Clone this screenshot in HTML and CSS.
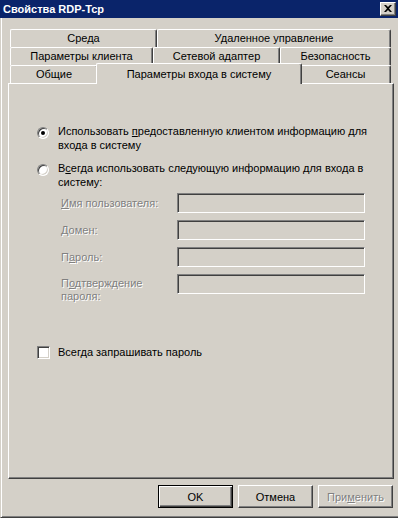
FILE: index.html
```html
<!DOCTYPE html>
<html lang="ru">
<head>
  <meta charset="UTF-8">
  <title>Свойства RDP-Tcp</title>
  <link rel="stylesheet" href="styles.css">
</head>
<body>

  <div class="window">
    <div class="titlebar">
      <span class="title">Свойства RDP-Tcp</span>
      <span class="close-btn">
        <svg width="8" height="7" viewBox="0 0 8 7"><path d="M0 0h2l2 2 2-2h2L5 3.5 8 7H6L4 5 2 7H0l3-3.5z" fill="#000"/></svg>
      </span>
    </div>

    <div class="client">
      <div class="tabs">
        <div class="tab-row">
          <div class="tab t-env">Среда</div>
          <div class="tab t-remote">Удаленное управление</div>
        </div>
        <div class="tab-row">
          <div class="tab t-client">Параметры клиента</div>
          <div class="tab t-adapter">Сетевой адаптер</div>
          <div class="tab t-security">Безопасность</div>
        </div>
        <div class="tab-row">
          <div class="tab t-general">Общие</div>
          <div class="tab t-logon active">Параметры входа в систему</div>
          <div class="tab t-sessions">Сеансы</div>
        </div>
      </div>

      <div class="panel">
        <div class="option">
          <span class="radio checked"></span>
          <span class="option-text">Использовать <u>п</u>редоставленную клиентом информацию для<br>входа в систему</span>
        </div>
        <div class="option second">
          <span class="radio"></span>
          <span class="option-text">В<u>с</u>егда использовать следующую информацию для входа в<br>систему:</span>
        </div>

        <div class="fields">
          <label class="field-label"><u>И</u>мя пользователя:</label>
          <span class="field"></span>
          <label class="field-label"><u>Д</u>омен:</label>
          <span class="field"></span>
          <label class="field-label">П<u>а</u>роль:</label>
          <span class="field"></span>
          <label class="field-label tall">П<u>о</u>дтверждение<br>пароля:</label>
          <span class="field"></span>
        </div>

        <div class="check-row">
          <span class="checkbox"></span>
          <span>Всегда запрашивать пароль</span>
        </div>
      </div>

      <div class="buttons">
        <button class="btn default">OK</button>
        <button class="btn">Отмена</button>
        <button class="btn disabled">При<u>м</u>енить</button>
      </div>
    </div>
  </div>

</body>
</html>
```

FILE: styles.css
```css
/*  Classic dialog colours  */
:root{
  --face: #d4d0c8;
  --light: #fff;
  --shadow: #808080;
  --dark: #404040;
  --caption: #0a246a;
}

* {
  box-sizing: border-box;
}
html, body {
  margin: 0;
  padding: 0;
}
body {
  width: 398px;
  height: 518px;
  background: var(--face);
  font-family: "Liberation Sans", Arial, sans-serif;
  font-size: 11px;
  color: #000;
}
u {
  text-decoration: underline;
  text-underline-offset: 1px;
}

/*  Window  */
.window {
  display: flex;
  flex-direction: column;
  width: 398px;
  height: 518px;
}
.titlebar {
  height: 18px;
  background: var(--caption);
  display: flex;
  align-items: center;
  justify-content: space-between;
  padding: 0 2px 0 3px;
}
.title {
  color: #fff;
  font-weight: bold;
  font-size: 11px;
}
.close-btn {
  width: 16px;
  height: 14px;
  background: var(--face);
  border: 1px solid;
  border-color: var(--light) var(--dark) var(--dark) var(--light);
  box-shadow: inset -1px -1px var(--shadow);
  display: flex;
  align-items: center;
  justify-content: center;
  padding-bottom: 1px;
}
.client {
  flex: 1;
  padding: 11px 0 0 7px;
  border-left: 1px solid var(--face);
  border-bottom: 1px solid var(--dark);
  box-shadow: inset 1px 0 var(--light), inset 0 -1px var(--shadow);
}

/*  Tabs  */
.tabs {
  width: 386px;
  padding: 0 2px;
}
.tab-row {
  display: flex;
  height: 18px;
}
.tab {
  flex: none;
  height: 18px;
  border-top: 1px solid var(--light);
  border-left: 1px solid var(--light);
  border-right: 1px solid var(--dark);
  border-radius: 2px 2px 0 0;
  box-shadow: inset -1px 0 var(--shadow);
  background: var(--face);
  line-height: 16px;
  text-align: center;
  white-space: nowrap;
}
.tab.active {
  position: relative;
  z-index: 1;
  height: 21px;
  margin: -2px -2px 0;
  padding-top: 2px;
}
.t-env { width: 147px; }
.t-remote { width: 234px; }
.t-client { width: 143px; }
.t-adapter { width: 127px; }
.t-security { width: 111px; }
.t-general { width: 88px; }
.t-logon { width: 206px; }
.t-sessions { width: 91px; }

/*  Page panel  */
.panel {
  width: 386px;
  height: 396px;
  border: 1px solid;
  border-color: var(--light) var(--dark) var(--dark) var(--light);
  box-shadow: inset -1px -1px var(--shadow);
  padding: 40px 0 0 28px;
}
.option {
  display: flex;
  gap: 9px;
  line-height: 14px;
  white-space: nowrap;
}
.option.second {
  margin-top: 9px;
}
.radio {
  flex: none;
  position: relative;
  width: 12px;
  height: 12px;
  margin-top: 3px;
  border-radius: 50%;
  background: #fff;
  border: 1px solid;
  border-color: var(--shadow) var(--light) var(--light) var(--shadow);
  box-shadow: inset 1px 1px var(--dark), inset -1px -1px var(--face);
}
.radio.checked::after {
  content: "";
  position: absolute;
  left: 3px;
  top: 3px;
  width: 4px;
  height: 4px;
  border-radius: 50%;
  background: #000;
}

/*  Credentials  */
.fields {
  display: grid;
  grid-template-columns: 116px 188px;
  row-gap: 7px;
  margin: 4px 0 0 24px;
}
.field-label {
  padding-top: 4px;
  line-height: 13px;
  color: var(--shadow);
  text-shadow: 1px 1px var(--light);
}
.field-label.tall {
  padding-top: 3px;
}
.field {
  height: 20px;
  background: var(--face);
  border: 1px solid;
  border-color: var(--shadow) var(--light) var(--light) var(--shadow);
  box-shadow: inset 1px 1px var(--dark), inset -1px -1px var(--face);
}

.check-row {
  display: flex;
  align-items: center;
  gap: 8px;
  margin-top: 42px;
  line-height: 14px;
}
.checkbox {
  flex: none;
  width: 13px;
  height: 13px;
  background: #fff;
  border: 1px solid;
  border-color: var(--shadow) var(--light) var(--light) var(--shadow);
  box-shadow: inset 1px 1px var(--dark), inset -1px -1px var(--face);
}

/*  Dialog buttons  */
.buttons {
  width: 386px;
  display: flex;
  justify-content: flex-end;
  gap: 5px;
  margin-top: 6px;
  padding-right: 1px;
}
.btn {
  width: 75px;
  height: 23px;
  padding: 0;
  background: var(--face);
  border: 1px solid;
  border-color: var(--light) var(--dark) var(--dark) var(--light);
  box-shadow: inset -1px -1px var(--shadow);
  font-family: "Liberation Sans", Arial, sans-serif;
  font-size: 11px;
  font-weight: normal;
  color: #000;
}
.btn.default {
  border-color: #000;
  box-shadow: inset 1px 1px var(--light), inset -1px -1px var(--dark), inset -2px -2px var(--shadow);
}
.btn.disabled {
  color: var(--shadow);
  text-shadow: 1px 1px var(--light);
}
```
